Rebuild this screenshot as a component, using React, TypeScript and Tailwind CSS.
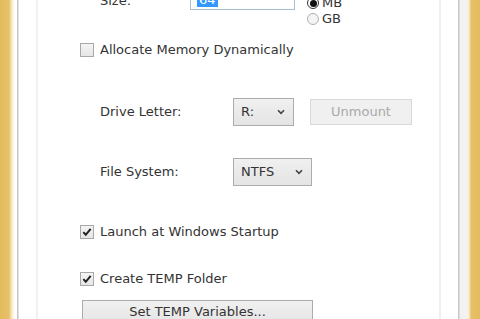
import React from "react";

function Check({ checked }: { checked?: boolean }) {
  return (
    <div className="w-[14px] h-[14px] shrink-0 border border-[#a8a8a8] bg-[linear-gradient(to_bottom,#f4f4f4,#e6e6e6)] flex items-center justify-center">
      {checked && (
        <svg width="10" height="10" viewBox="0 0 9 9">
          <path d="M1.2 4.6 L3.4 7 L7.8 1.6" stroke="#222" strokeWidth="1.8" fill="none" />
        </svg>
      )}
    </div>
  );
}

function Radio({ checked }: { checked?: boolean }) {
  return (
    <div
      className={
        "w-[12px] h-[12px] shrink-0 rounded-full border flex items-center justify-center " +
        (checked ? "border-[#333] bg-white" : "border-[#b0b0b0] bg-[#f4f4f4]")
      }
    >
      {checked && <div className="w-[7px] h-[7px] rounded-full bg-[#111]" />}
    </div>
  );
}

function Chevron() {
  return (
    <svg width="8" height="6" viewBox="0 0 8 6">
      <path d="M1 1.2 L4 4.4 L7 1.2" stroke="#444" strokeWidth="1.6" fill="none" />
    </svg>
  );
}

export default function App() {
  return (
    <div className="w-[480px] h-[319px] overflow-hidden bg-white flex font-['DejaVu_Sans',sans-serif] text-[13px] leading-[14px] text-[#333]">
      <div className="w-[17px] shrink-0 bg-[linear-gradient(to_right,#e3bb5e_0px,#e6c16a_9px,#fbecc8_12px,#ffffff_15px)]" />
      <div className="w-[1px] shrink-0 bg-[#c4c4c4]" />
      <div className="w-[1px] shrink-0 bg-[#e2e2e2]" />
      <div className="w-[17px] shrink-0 bg-white" />
      <div className="w-[2px] shrink-0 bg-[#f1f1f1]" />
      <div className="w-[401px] shrink-0 flex flex-col pl-[42px]">
        {/* Size row */}
        <div className="mt-[-16px] h-[44px] flex items-start shrink-0">
          <div className="w-[110px] pl-[20px] pt-[10px]">Size:</div>
          <div className="w-[105px] h-[26px] border border-[#a9bdd3] bg-white flex items-start pt-[8px] pl-[6px]">
            <span className="bg-[#3399ff] text-white px-[2px]">64</span>
          </div>
          <div className="ml-[12px] pt-[13px] flex flex-col gap-[4px]">
            <div className="h-[12px] flex items-center gap-[3px]">
              <Radio checked />
              <span>MB</span>
            </div>
            <div className="h-[12px] flex items-center gap-[3px]">
              <Radio />
              <span>GB</span>
            </div>
          </div>
        </div>
        {/* Allocate */}
        <div className="mt-[15px] h-[14px] flex items-center gap-[6px] shrink-0">
          <Check />
          <span>Allocate Memory Dynamically</span>
        </div>
        {/* Drive letter */}
        <div className="mt-[41px] h-[28px] flex items-center shrink-0">
          <div className="w-[153px] pl-[20px]">Drive Letter:</div>
          <div className="w-[61px] h-[28px] border border-[#acacac] bg-[linear-gradient(to_bottom,#f0f0f0,#e4e4e4)] flex items-center justify-between pl-[7px] pr-[8px]">
            <span>R:</span>
            <Chevron />
          </div>
          <div className="ml-[16px] w-[102px] h-[26px] border border-[#d9d9d9] bg-[#f0f0f0] flex items-center justify-center text-[#a9a9a9]">
            Unmount
          </div>
        </div>
        {/* File system */}
        <div className="mt-[32px] h-[28px] flex items-center shrink-0">
          <div className="w-[153px] pl-[20px]">File System:</div>
          <div className="w-[79px] h-[28px] border border-[#acacac] bg-[linear-gradient(to_bottom,#f0f0f0,#e4e4e4)] flex items-center justify-between pl-[7px] pr-[8px]">
            <span>NTFS</span>
            <Chevron />
          </div>
        </div>
        {/* Launch */}
        <div className="mt-[39px] h-[14px] flex items-center gap-[6px] shrink-0">
          <Check checked />
          <span>Launch at Windows Startup</span>
        </div>
        {/* Create TEMP */}
        <div className="mt-[33px] h-[14px] flex items-center gap-[6px] shrink-0">
          <Check checked />
          <span>Create TEMP Folder</span>
        </div>
        <div className="mt-[14px] ml-[2px] w-[231px] h-[24px] shrink-0 border border-[#acacac] bg-[linear-gradient(to_bottom,#f0f0f0,#e5e5e5)] flex items-center justify-center">
          Set TEMP Variables...
        </div>
      </div>
      <div className="w-[2px] shrink-0 bg-[#efefef]" />
      <div className="w-[17px] shrink-0 bg-white" />
      <div className="w-[1px] shrink-0 bg-[#c6c6c6]" />
      <div className="w-[1px] shrink-0 bg-[#dcdcdc]" />
      <div className="w-[20px] shrink-0 bg-[linear-gradient(to_right,#f2f2f2_0px,#f2f2f2_7px,#fbecc8_9px,#e6c16a_11px,#e3bb5e_20px)]" />
    </div>
  );
}
